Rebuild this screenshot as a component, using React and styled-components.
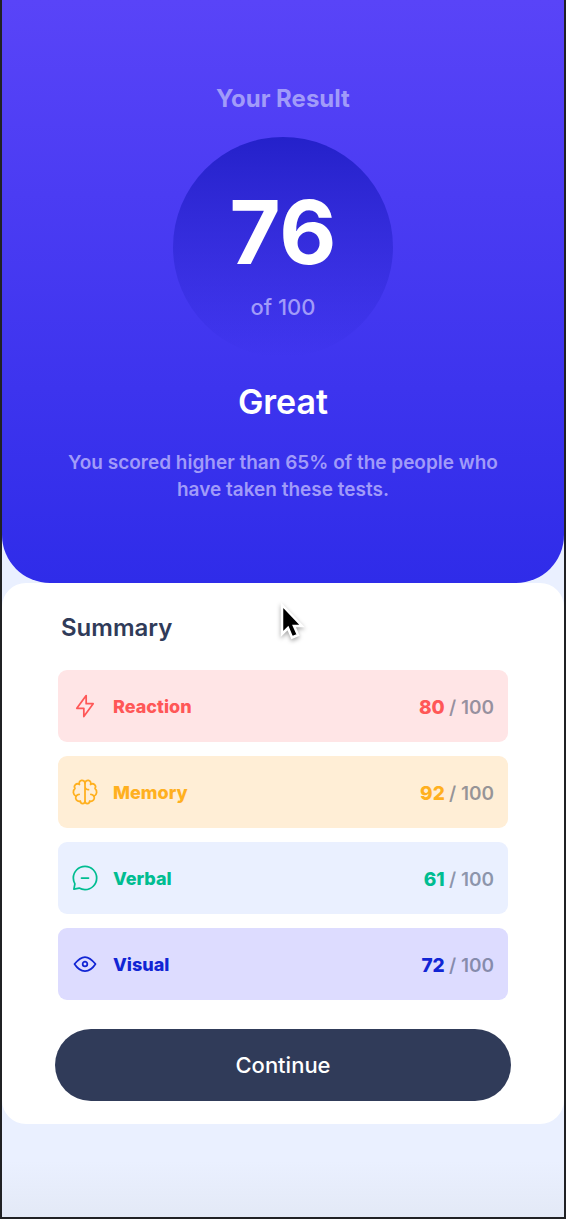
import React from "react";
import styled, { createGlobalStyle } from "styled-components";

const GlobalStyle = createGlobalStyle`
  *, *::before, *::after { box-sizing: border-box; }
  body {
    margin: 0;
    background: #202124;
    font-family: Inter, "Liberation Sans", sans-serif;
  }
  h1, h2, p, ul { margin: 0; padding: 0; }
`;

const Page = styled.main`
  min-height: 100vh;
  border: 2px solid #202124;
  border-top: 0;
  background: linear-gradient(to top, #e3e9f6 0, #eaf0ff 56px);
`;

const Hero = styled.section`
  display: flex;
  flex-direction: column;
  align-items: center;
  padding: 81px 56px 80px;
  border-radius: 0 0 48px 48px;
  background: linear-gradient(#5944f8, #2f2ce9);
  color: #a19bf9;
  text-align: center;
`;

const HeroTitle = styled.h1`
  font-size: 24px;
  line-height: 36px;
  font-weight: 700;
`;

const ScoreCircle = styled.div`
  display: flex;
  flex-direction: column;
  align-items: center;
  width: 220px;
  height: 220px;
  margin-top: 20px;
  padding-top: 44px;
  border-radius: 50%;
  background: linear-gradient(#2421ca, rgba(46, 43, 233, 0));
`;

const Score = styled.strong`
  color: #fff;
  font-size: 88px;
  line-height: 102px;
  font-weight: 700;
`;

const ScoreTotal = styled.span`
  margin-top: 6px;
  font-size: 22px;
  line-height: 36px;
  font-weight: 500;
`;

const Verdict = styled.h2`
  margin-top: 21px;
  color: #fff;
  font-size: 34px;
  line-height: 48px;
  font-weight: 600;
`;

const Message = styled.p`
  max-width: 450px;
  margin-top: 23px;
  font-size: 19px;
  line-height: 27px;
  font-weight: 600;
`;

const Card = styled.section`
  position: relative;
  padding: 27px 53px 23px;
  border-radius: 24px;
  background: #fff;
`;

const CardTitle = styled.h2`
  padding: 0 6px;
  color: #303b59;
  font-size: 24px;
  line-height: 36px;
  font-weight: 600;
`;

const Results = styled.ul`
  display: flex;
  flex-direction: column;
  gap: 14px;
  margin: 24px 3px 29px;
  list-style: none;
`;

const Row = styled.li`
  display: flex;
  align-items: center;
  gap: 14px;
  height: 72px;
  padding: 0 14px 0 13px;
  border-radius: 9px;
  background: ${(p) => p.$tint};
  color: ${(p) => p.$color};
  line-height: 28px;
`;

const Icon = styled.svg`
  flex: none;
  width: 28px;
  height: 28px;
  fill: none;
  stroke: currentColor;
  stroke-width: 1.25;
  stroke-linecap: round;
  stroke-linejoin: round;
`;

const RowName = styled.span`
  padding-top: 2px;
  font-size: 18px;
  font-weight: 800;
`;

const RowScore = styled.span`
  margin-left: auto;
  padding-top: 4px;
  font-size: 19px;
  font-weight: 800;
`;

const RowTotal = styled.span`
  color: rgba(48, 59, 89, 0.5);
  font-weight: 600;
`;

const ContinueButton = styled.button`
  display: block;
  width: 100%;
  height: 72px;
  border: 0;
  border-radius: 36px;
  background: #303b59;
  color: #fff;
  font-family: inherit;
  font-size: 22px;
  font-weight: 500;
  cursor: pointer;
`;

const Pointer = styled.svg`
  position: absolute;
  top: 18px;
  left: calc(50% - 5px);
  width: 28px;
  height: 42px;
  filter: drop-shadow(0 2px 2px rgba(0, 0, 0, 0.35));
  pointer-events: none;
`;

const results = [
  {
    name: "Reaction",
    score: 80,
    color: "#ff5757",
    tint: "#ffe5e6",
    paths: ["M10.833 8.333V2.5l-6.666 9.167h5V17.5l6.666-9.167h-5Z"],
  },
  {
    name: "Memory",
    score: 92,
    color: "#ffb01f",
    tint: "#ffeed6",
    paths: [
      "M5.833 11.667a2.5 2.5 0 1 0 .834 4.858",
      "M3.553 13.004a3.333 3.333 0 0 1-.728-5.53m.025-.067a2.083 2.083 0 0 1 2.983-2.824m.199.054A2.083 2.083 0 1 1 10 3.75v12.917a1.667 1.667 0 0 1-3.333 0M10 5.833a2.5 2.5 0 0 0 2.5 2.5m1.667 3.334a2.5 2.5 0 1 1-.834 4.858",
      "M16.447 13.004a3.334 3.334 0 0 0 .728-5.53m-.025-.067a2.083 2.083 0 0 0-2.983-2.824M10 3.75a2.085 2.085 0 0 1 2.538-2.033 2.084 2.084 0 0 1 1.43 2.92m-.635 12.03a1.667 1.667 0 0 1-3.333 0",
    ],
  },
  {
    name: "Verbal",
    score: 61,
    color: "#00bd91",
    tint: "#eaf0ff",
    paths: [
      "M7.5 10h5",
      "M10 18.333A8.333 8.333 0 1 0 1.667 10c0 1.518.406 2.942 1.115 4.167l-.699 3.75 3.75-.699A8.295 8.295 0 0 0 10 18.333Z",
    ],
  },
  {
    name: "Visual",
    score: 72,
    color: "#1125d4",
    tint: "#dddcff",
    paths: [
      "M10 11.667a1.667 1.667 0 1 0 0-3.334 1.667 1.667 0 0 0 0 3.334Z",
      "M17.5 10c-1.574 2.492-4.402 5-7.5 5s-5.926-2.508-7.5-5C4.416 7.632 6.66 5 10 5s5.584 2.632 7.5 5Z",
    ],
  },
];

export default function App() {
  return (
    <>
      <GlobalStyle />
      <Page>
        <Hero>
          <HeroTitle>Your Result</HeroTitle>
          <ScoreCircle>
            <Score>76</Score>
            <ScoreTotal>of 100</ScoreTotal>
          </ScoreCircle>
          <Verdict>Great</Verdict>
          <Message>
            You scored higher than 65% of the people who have taken these tests.
          </Message>
        </Hero>
        <Card>
          <CardTitle>Summary</CardTitle>
          <Results>
            {results.map((r) => (
              <Row key={r.name} $color={r.color} $tint={r.tint}>
                <Icon viewBox="0 0 20 20" aria-hidden="true">
                  {r.paths.map((d) => (
                    <path key={d} d={d} />
                  ))}
                </Icon>
                <RowName>{r.name}</RowName>
                <RowScore>
                  {r.score} <RowTotal>/ 100</RowTotal>
                </RowScore>
              </Row>
            ))}
          </Results>
          <ContinueButton type="button">Continue</ContinueButton>
          <Pointer viewBox="0 0 28 42" aria-hidden="true">
            <path
              d="M4 4v29l6-6 4 9.5 6-2.5-4-9h8Z"
              fill="#000"
              stroke="#fff"
              strokeWidth="2.5"
            />
          </Pointer>
        </Card>
      </Page>
    </>
  );
}
